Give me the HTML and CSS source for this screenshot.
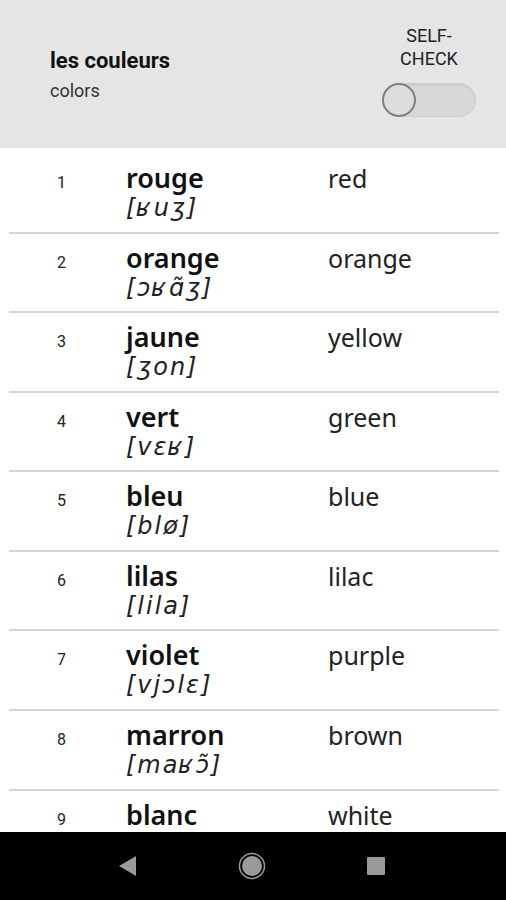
FILE: index.html
```html
<!DOCTYPE html>
<html lang="fr">
<head>
<meta charset="utf-8">
<title>les couleurs</title>
<link rel="stylesheet" href="styles.css">
</head>
<body>
<div class="screen">
  <header class="header">
    <div class="heading">
      <div class="title">les couleurs</div>
      <div class="subtitle">colors</div>
    </div>
    <div class="selfcheck">
      <div class="selfcheck-label">SELF-<br>CHECK</div>
      <div class="switch"><span class="knob"></span></div>
    </div>
  </header>
  <main class="list">
    <div class="row"><div class="num">1</div><div class="word"><div class="fr">rouge</div><div class="ipa">[ʁuʒ]</div></div><div class="en">red</div></div>
    <div class="row"><div class="num">2</div><div class="word"><div class="fr">orange</div><div class="ipa">[ɔʁɑ̃ʒ]</div></div><div class="en">orange</div></div>
    <div class="row"><div class="num">3</div><div class="word"><div class="fr">jaune</div><div class="ipa">[ʒon]</div></div><div class="en">yellow</div></div>
    <div class="row"><div class="num">4</div><div class="word"><div class="fr">vert</div><div class="ipa">[vɛʁ]</div></div><div class="en">green</div></div>
    <div class="row"><div class="num">5</div><div class="word"><div class="fr">bleu</div><div class="ipa">[blø]</div></div><div class="en">blue</div></div>
    <div class="row"><div class="num">6</div><div class="word"><div class="fr">lilas</div><div class="ipa">[lila]</div></div><div class="en">lilac</div></div>
    <div class="row"><div class="num">7</div><div class="word"><div class="fr">violet</div><div class="ipa">[vjɔlɛ]</div></div><div class="en">purple</div></div>
    <div class="row"><div class="num">8</div><div class="word"><div class="fr">marron</div><div class="ipa">[maʁɔ̃]</div></div><div class="en">brown</div></div>
    <div class="row"><div class="num">9</div><div class="word"><div class="fr">blanc</div><div class="ipa">[blɑ̃]</div></div><div class="en">white</div></div>
  </main>
  <nav class="navbar">
    <svg class="nav-icon" width="18" height="20" viewBox="0 0 18 20"><polygon points="17,0 17,20 0,10" fill="#9a9a9a"/></svg>
    <svg class="nav-icon" width="28" height="28" viewBox="0 0 28 28"><circle cx="14" cy="14" r="12.5" fill="none" stroke="#9a9a9a" stroke-width="1.5"/><circle cx="14" cy="14" r="10" fill="#9a9a9a"/></svg>
    <svg class="nav-icon" width="18" height="18" viewBox="0 0 18 18"><rect x="0" y="0" width="18" height="18" rx="1" fill="#9a9a9a"/></svg>
  </nav>
</div>
</body>
</html>
```

FILE: styles.css
```css
html, body {
  margin: 0;
  padding: 0;
  background: #ffffff;
}

.screen {
  width: 506px;
  height: 900px;
  display: flex;
  flex-direction: column;
  overflow: hidden;
  font-family: Roboto, "Noto Sans", sans-serif;
}

.header {
  height: 148px;
  flex: none;
  background: #e5e5e5;
  display: flex;
  justify-content: space-between;
  padding: 0 30px 0 50px;
  box-sizing: border-box;
}

.heading {
  padding-top: 48px;
}

.title {
  font-size: 22px;
  line-height: 26px;
  font-weight: 700;
  color: #111111;
}

.subtitle {
  margin-top: 2px;
  font-size: 18px;
  line-height: 30px;
  color: #333333;
}

.selfcheck {
  width: 94px;
  padding-top: 24px;
  display: flex;
  flex-direction: column;
  align-items: center;
}

.selfcheck-label {
  font-size: 18px;
  line-height: 23px;
  text-align: center;
  color: #222222;
}

.switch {
  position: relative;
  margin-top: 13px;
  width: 94px;
  height: 34px;
  border-radius: 17px;
  background: #d8d8d8;
  box-sizing: border-box;
  border: 1px solid #cdcdcd;
  box-shadow: inset 0 1px 2px rgba(0, 0, 0, 0.08);
}

.knob {
  position: absolute;
  left: -1px;
  top: -1px;
  width: 34px;
  height: 34px;
  border-radius: 50%;
  box-sizing: border-box;
  background: #dddddd;
  border: 2px solid #808080;
}

.list {
  flex: 1;
  overflow: hidden;
  padding: 6px 7px 0 9px;
}

.row {
  height: 79.57px;
  box-sizing: border-box;
  padding-top: 9px;
  border-bottom: 2px solid #d6d6d6;
  display: grid;
  grid-template-columns: 117px 202px 1fr;
  align-items: baseline;
}

.num {
  padding-left: 48px;
  font-family: Roboto, sans-serif;
  font-size: 16px;
  color: #222222;
}

.fr {
  font-family: "Noto Sans", sans-serif;
  font-size: 27px;
  line-height: 30px;
  font-weight: 600;
  color: #111111;
}

.ipa {
  font-family: "DejaVu Sans", sans-serif;
  font-style: italic;
  font-size: 24px;
  line-height: 31px;
  letter-spacing: 2px;
  color: #222222;
}

.en {
  font-family: "Noto Sans", sans-serif;
  font-size: 25px;
  line-height: 30px;
  color: #222222;
}

.navbar {
  flex: none;
  height: 68px;
  background: #000000;
  display: flex;
  align-items: center;
  justify-content: center;
  gap: 101px;
  padding-right: 2px;
}

.nav-icon {
  display: block;
}
```
